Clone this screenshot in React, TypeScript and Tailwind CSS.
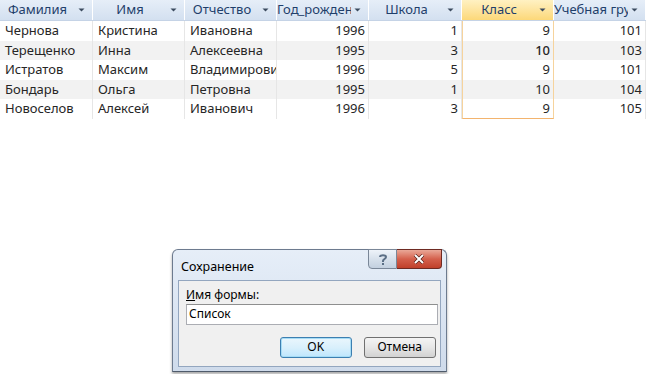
const columns = [
  { title: "Фамилия", w: "w-[93px]" },
  { title: "Имя", w: "w-[92px]" },
  { title: "Отчество", w: "w-[92px]" },
  { title: "Год_рождения", w: "w-[92px]" },
  { title: "Школа", w: "w-[93px]" },
  { title: "Класс", w: "w-[92px]" },
  { title: "Учебная группа", w: "w-[92px]" },
];

const rows = [
  ["Чернова", "Кристина", "Ивановна", "1996", "1", "9", "101"],
  ["Терещенко", "Инна", "Алексеевна", "1995", "3", "10", "103"],
  ["Истратов", "Максим", "Владимирович", "1996", "5", "9", "101"],
  ["Бондарь", "Ольга", "Петровна", "1995", "1", "10", "104"],
  ["Новоселов", "Алексей", "Иванович", "1996", "3", "9", "105"],
];

const Arrow = () => (
  <svg width="7" height="4" viewBox="0 0 7 4" className="shrink-0">
    <path d="M0.5 0.5 L6.5 0.5 L3.5 3.5 Z" fill="#3b4a5e" />
  </svg>
);

const Table = () => {
  return (
    <div className="w-[646px] font-['Noto_Sans',sans-serif] text-[13px]">
      <div className="flex h-[21px] border-b border-[#c5d3e6]">
        {columns.map((c, i) => (
          <div
            key={c.title}
            className={`${c.w} flex items-center pr-[7px] border-r border-white ${
              i === 5
                ? "bg-gradient-to-b from-[#fff1c2] to-[#fcd878]"
                : "bg-gradient-to-b from-[#e6eef8] to-[#d3e0f0]"
            }`}
          >
            <span className="flex-1 overflow-hidden whitespace-nowrap text-center text-[#1f3f6b] mr-[3px]">
              {c.title}
            </span>
            <Arrow />
          </div>
        ))}
      </div>
      {rows.map((r, ri) => (
        <div
          key={ri}
          className={`flex h-[19.5px] ${ri % 2 === 1 ? "bg-[#f2f2f2]" : "bg-white"}`}
        >
          {r.map((v, ci) => (
            <div
              key={ci}
              className={`${columns[ci].w} flex items-center overflow-hidden whitespace-nowrap text-[#262626] ${
                ci >= 3 ? "justify-end pr-[3px]" : "pl-[5px]"
              } ${
                ci === 5
                  ? `border-x border-[#f6d39c] ${ri === 4 ? "border-b border-b-[#f3b46e]" : ""}`
                  : "border-r border-[#e6e6e6]"
              } ${ci === 5 && ri === 1 ? "font-medium" : ""}`}
            >
              {v}
            </div>
          ))}
        </div>
      ))}
    </div>
  );
};

const Dialog = () => {
  return (
    <div className="ml-[172px] mt-[130px] w-[275px] h-[123px] rounded-t-[6px] border border-[#6d7b8f] border-b-[#4f5b6b] bg-gradient-to-b from-[#e6eef8] via-[#dbe5f2] to-[#cfdbeb] px-[5px] pb-[4px] flex flex-col font-['Noto_Sans',sans-serif] shadow-[0_2px_3px_rgba(0,0,0,0.35)]">
      <div className="h-[30px] flex items-start">
        <span className="mt-[8px] ml-[3px] text-[12.5px] text-black flex-1">Сохранение</span>
        <div className="flex -mt-px -mr-px">
          <div className="w-[29px] h-[20px] rounded-bl-[4px] border border-[#7a8798] bg-gradient-to-b from-[#eef3f9] via-[#d7e1ec] to-[#c3d0df] flex items-center justify-center">
            <svg width="10" height="12" viewBox="0 0 10 12">
              <path
                d="M2 4 C2 1.5 8 1.5 8 4 C8 6 5 6 5 8 L5 9"
                stroke="#5b6f86"
                strokeWidth="2"
                fill="none"
              />
              <rect x="4" y="10" width="2" height="2" fill="#5b6f86" />
            </svg>
          </div>
          <div className="w-[45px] h-[20px] rounded-br-[4px] border border-l-0 border-[#6e2a22] bg-gradient-to-b from-[#e9a898] via-[#d4604c] to-[#c0402a] flex items-center justify-center">
            <svg width="12" height="10" viewBox="0 0 12 10">
              <path d="M2 1 L10 9 M10 1 L2 9" stroke="#4a1a12" strokeWidth="3.2" />
              <path d="M2 1 L10 9 M10 1 L2 9" stroke="white" strokeWidth="2" />
            </svg>
          </div>
        </div>
      </div>
      <div className="flex-1 bg-[#f0f0f0] border border-[#93a6bf] pl-[7px] pr-[4px] pt-[6px] flex flex-col">
        <span className="text-[12px] text-black leading-[15px]">
          <span className="underline">И</span>мя формы:
        </span>
        <div className="mt-[2px] h-[21px] w-[252px] bg-white border border-[#abadb3] border-t-[#8e8f8f] flex items-center px-[2px] text-[12px] text-black">
          Список
        </div>
        <div className="flex mt-[12px] gap-[12px] pl-[94px]">
          <button className="w-[72px] h-[21px] rounded-[3px] border border-[#3c7fb1] shadow-[inset_0_0_0_1px_#a6dcf5] bg-gradient-to-b from-[#eaf6fd] via-[#d9f0fc] to-[#bee6fd] text-[12px] text-black flex items-center justify-center">
            OK
          </button>
          <button className="w-[73px] h-[21px] rounded-[3px] border border-[#707070] bg-gradient-to-b from-[#f4f4f4] via-[#e6e6e6] to-[#d2d2d2] text-[12px] text-black flex items-center justify-center">
            Отмена
          </button>
        </div>
      </div>
    </div>
  );
};

const App = () => {
  return (
    <div className="w-[646px] h-[374px] bg-white overflow-hidden flex flex-col">
      <Table />
      <Dialog />
    </div>
  );
};

export default App;
